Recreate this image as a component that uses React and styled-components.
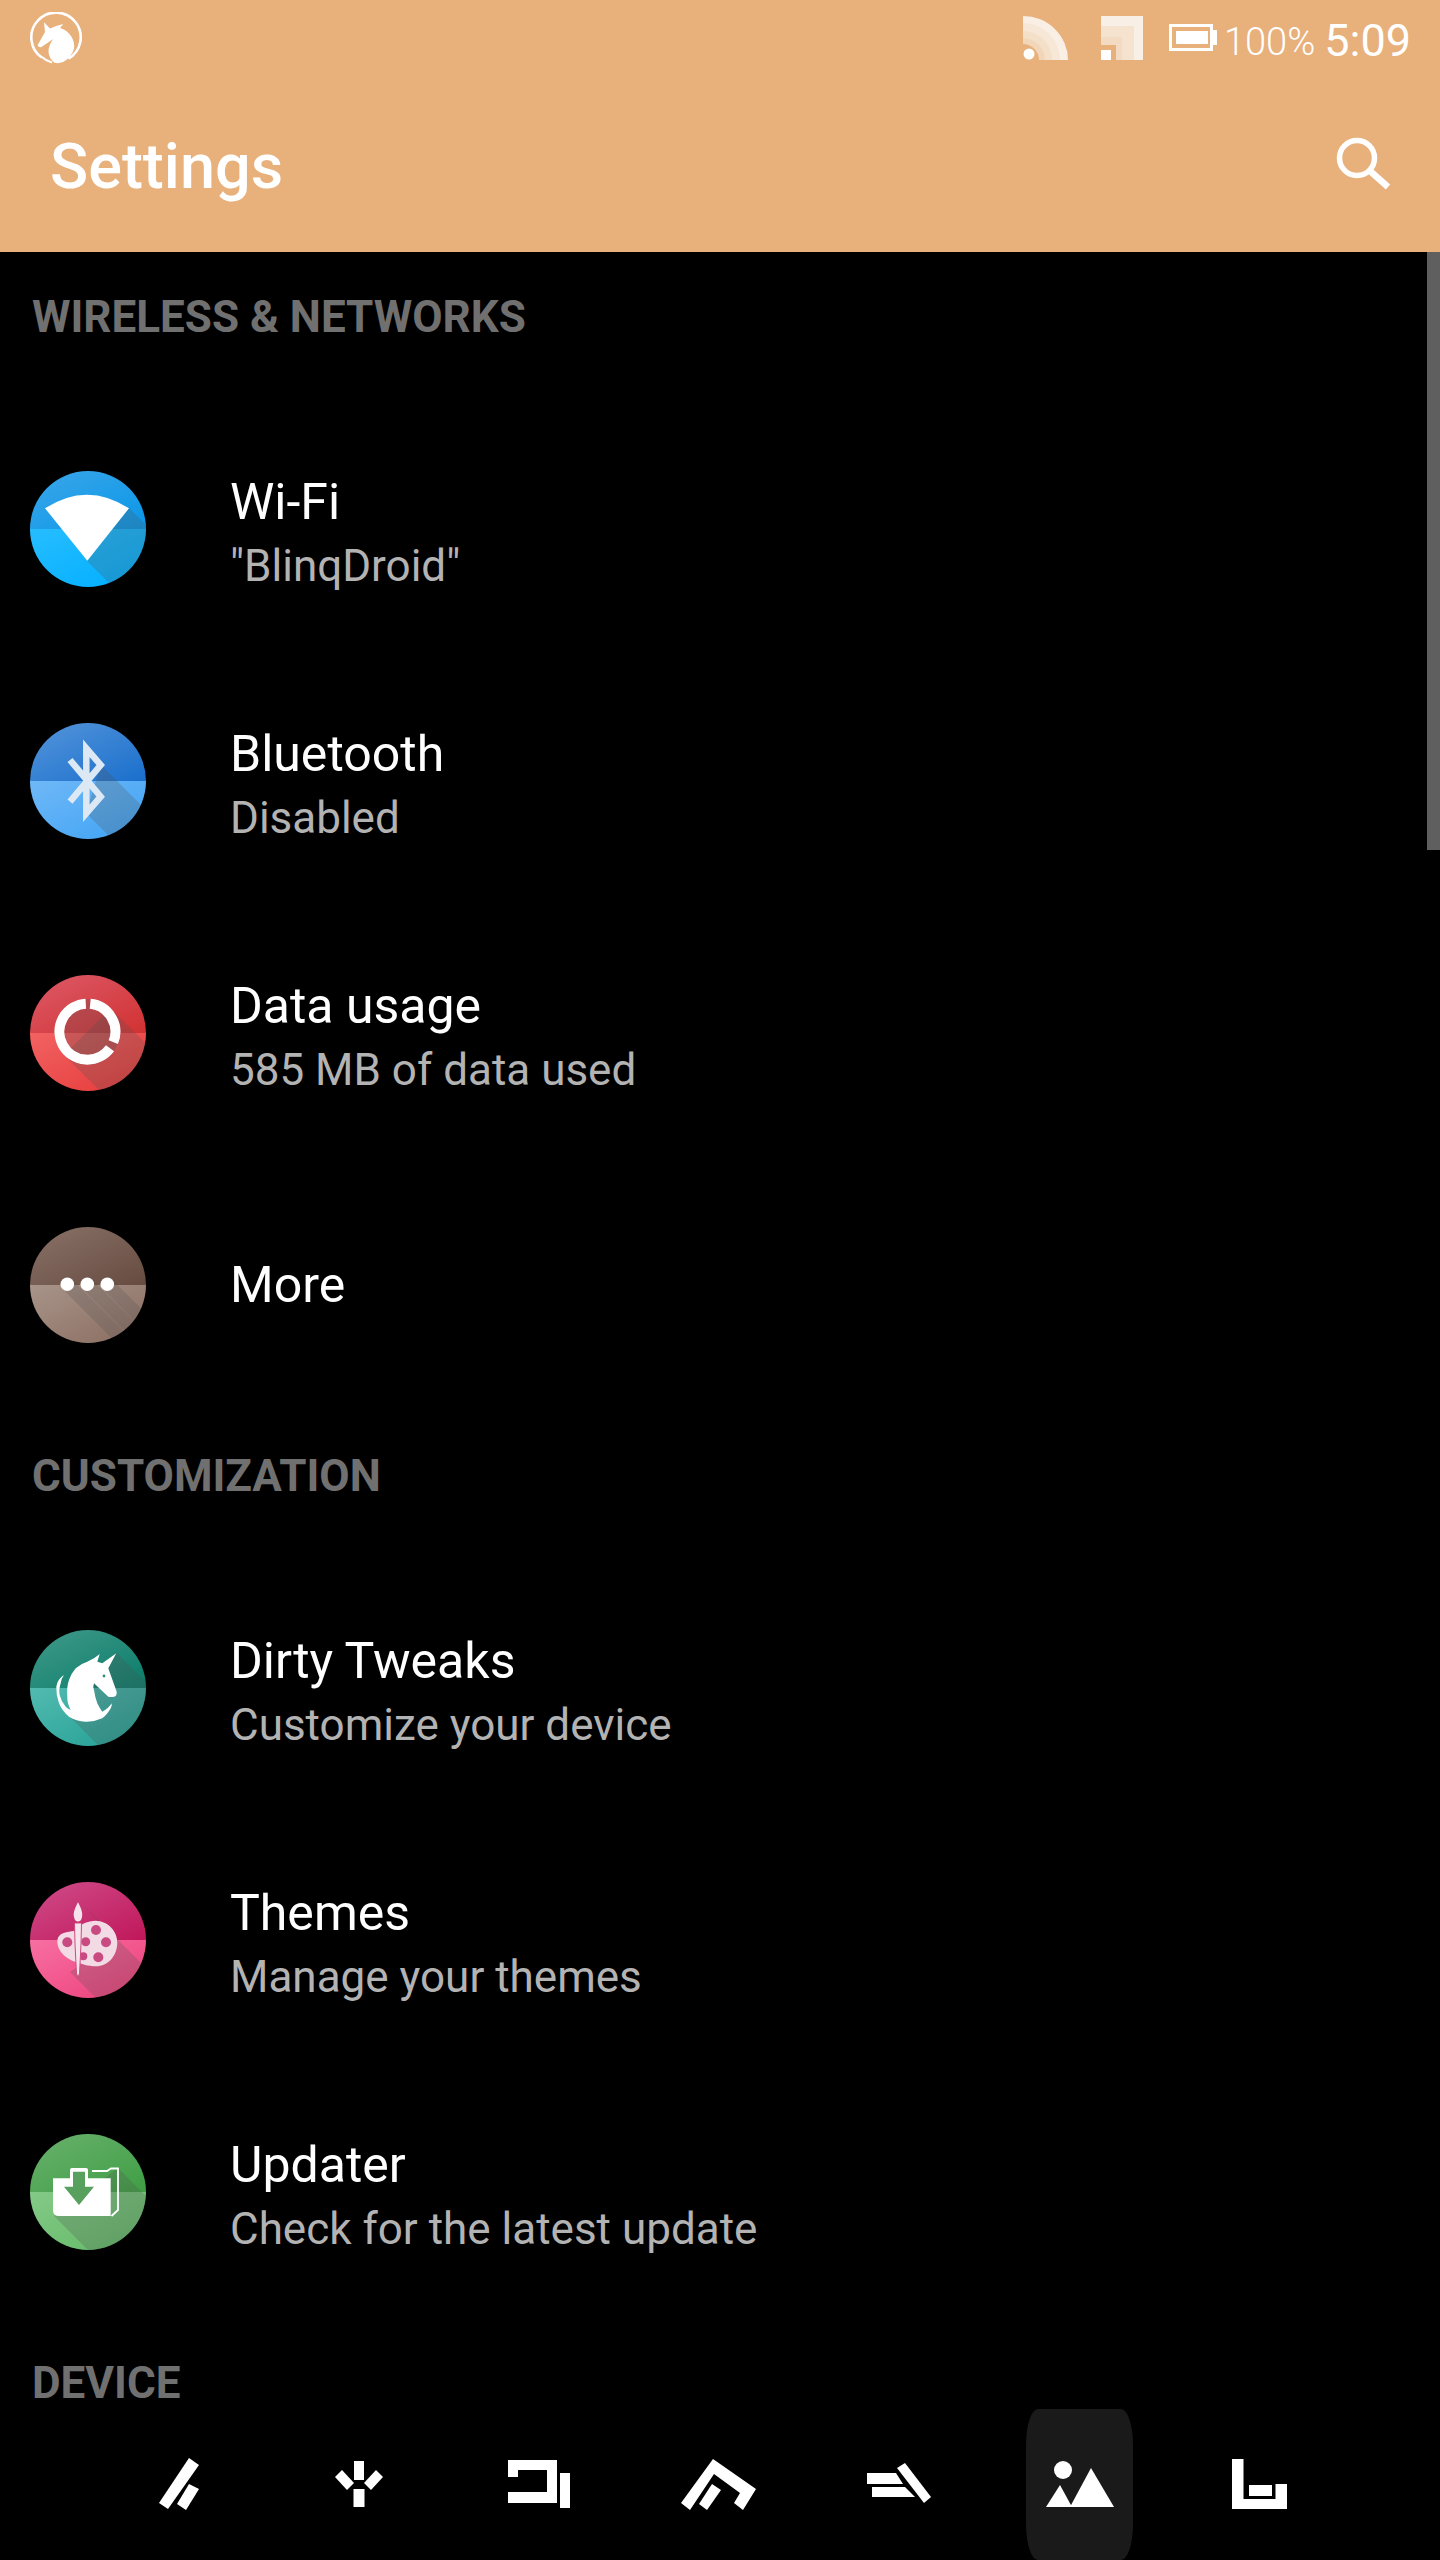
import React from "react";
import styled, { createGlobalStyle } from "styled-components";

const GlobalStyle = createGlobalStyle`
  html, body {
    margin: 0;
    padding: 0;
    background: #000;
  }
  body {
    font-family: "Roboto", "Liberation Sans", sans-serif;
  }
`;

const Page = styled.div`
  width: 1440px;
  height: 2560px;
  display: flex;
  flex-direction: column;
  overflow: hidden;
  background: #000;
`;

const Header = styled.header`
  height: 252px;
  flex: none;
  background: #e8b07b;
  color: #fff;
`;

const StatusBar = styled.div`
  height: 84px;
  display: flex;
  align-items: flex-start;
  padding: 12px 29px 0 30px;
  box-sizing: border-box;
`;

const StatusRight = styled.div`
  margin-left: auto;
  display: flex;
  align-items: flex-start;
  padding-top: 4px;
`;

const StatusIcon = styled.svg`
  display: block;
  flex: none;
  margin-right: ${(p) => p.$gap}px;
`;

const Battery = styled.span`
  font-size: 38px;
  font-weight: 300;
  line-height: 44px;
  margin: 4px 9px 0 7px;
`;

const Clock = styled.span`
  font-size: 45px;
  font-weight: 400;
  line-height: 50px;
`;

const Toolbar = styled.div`
  height: 168px;
  display: flex;
  align-items: center;
  justify-content: space-between;
  padding: 0 47px 0 50px;
  box-sizing: border-box;
`;

const Title = styled.h1`
  margin: 0 0 2px 0;
  font-size: 63px;
  font-weight: 500;
  line-height: 80px;
`;

const SearchIcon = styled.svg`
  display: block;
  margin-bottom: 8px;
`;

const List = styled.main`
  flex: 1;
  min-height: 0;
  position: relative;
  overflow: hidden;
`;

const Scrollbar = styled.div`
  position: absolute;
  top: 0;
  right: 0;
  width: 13px;
  height: 598px;
  background: #5f5f5f;
`;

const SectionTitle = styled.h2`
  margin: 0;
  height: 151px;
  padding: 37px 0 0 32px;
  box-sizing: border-box;
  font-size: 44px;
  font-weight: 700;
  line-height: 56px;
  color: #707070;
  text-transform: uppercase;
`;

const Row = styled.div`
  height: 252px;
  display: flex;
  align-items: center;
  padding-left: 30px;
`;

const IconSvg = styled.svg`
  display: block;
  flex: none;
  margin-right: 84px;
`;

const RowText = styled.div`
  display: flex;
  flex-direction: column;
  padding-top: ${(p) => (p.$single ? 0 : 9)}px;
`;

const RowTitle = styled.div`
  font-size: 50px;
  line-height: 62px;
  color: #fff;
`;

const RowSub = styled.div`
  margin-top: 2px;
  font-size: 44px;
  line-height: 62px;
  color: #b3b3b3;
`;

const NavBar = styled.nav`
  height: 151px;
  flex: none;
  display: flex;
  justify-content: center;
  background: #000;
`;

const NavSlot = styled.div`
  width: 180px;
  height: 151px;
  position: relative;
  display: flex;
  justify-content: center;
  &::before {
    content: "";
    display: ${(p) => (p.$active ? "block" : "none")};
    position: absolute;
    top: 0;
    bottom: 0;
    left: 36px;
    width: 107px;
    border-radius: 12px / 36px;
    background: #1a1a1a;
  }
`;

const NavSvg = styled.svg`
  display: block;
  position: relative;
`;

function AppIcon({ id, top, bottom, shadow, children }) {
  return (
    <IconSvg width="116" height="116" viewBox="0 0 116 116">
      <defs>
        <clipPath id={`${id}-clip`}>
          <circle cx="58" cy="58" r="58" />
        </clipPath>
        <linearGradient id={`${id}-top`} x1="0" y1="0" x2="1" y2="1">
          <stop offset="0" stopColor={top[0]} />
          <stop offset="1" stopColor={top[1]} />
        </linearGradient>
        <linearGradient id={`${id}-bottom`} x1="0" y1="0" x2="1" y2="1">
          <stop offset="0" stopColor={bottom[0]} />
          <stop offset="1" stopColor={bottom[1]} />
        </linearGradient>
      </defs>
      <g clipPath={`url(#${id}-clip)`}>
        <rect width="116" height="58" fill={`url(#${id}-top)`} />
        <rect y="58" width="116" height="58" fill={`url(#${id}-bottom)`} />
        {shadow.map((points) => (
          <polygon key={points} points={points} fill="#505050" fillOpacity="0.24" />
        ))}
      </g>
      {children}
    </IconSvg>
  );
}

const ROWS = {
  wifi: {
    title: "Wi-Fi",
    sub: '"BlinqDroid"',
    top: ["#3ba6e9", "#0a97e8"],
    bottom: ["#27bdff", "#00aeff"],
    shadow: ["99,37 57,90 157,190 199,137"],
    glyph: <path d="M15 37.3 Q57 10 99 37.3 L57.3 89.7 Z" fill="#fff" />,
  },
  bluetooth: {
    title: "Bluetooth",
    sub: "Disabled",
    top: ["#5595db", "#1a6fcc"],
    bottom: ["#6fb8f7", "#3fa3f5"],
    shadow: ["71,42 56,90 156,190 171,142"],
    glyph: (
      <path
        d="M40 78.7 L70.7 42 L56.3 25.3 V90.3 L70.7 73.7 L40 37"
        fill="none"
        stroke="#dce8f3"
        strokeWidth="6.5"
      />
    ),
  },
  data: {
    title: "Data usage",
    sub: "585 MB of data used",
    top: ["#dc5a68", "#d23232"],
    bottom: ["#f26262", "#e53a3a"],
    shadow: ["80.6,33.4 34,80 134,180 180.6,133.4"],
    glyph: (
      <g fill="none" stroke="#fff" strokeWidth="10">
        <circle cx="57.3" cy="56.7" r="33" fill="#505050" fillOpacity="0.24" stroke="none" />
        <path d="M60.2 28.8 A28 28 0 0 1 83.3 67.2" />
        <path d="M80 73.2 A28 28 0 1 1 55.8 28.7" />
      </g>
    ),
  },
  more: {
    title: "More",
    top: ["#8a7268", "#664b40"],
    bottom: ["#a89489", "#8a6c60"],
    shadow: [
      "42,52.6 32.6,62 132.6,162 142,152.6",
      "62,52.6 52.6,62 152.6,162 162,152.6",
      "82,52.6 72.6,62 172.6,162 182,152.6",
    ],
    glyph: (
      <g fill="#fff">
        <circle cx="37.3" cy="57.3" r="6.8" />
        <circle cx="57.3" cy="57.3" r="6.8" />
        <circle cx="77.3" cy="57.3" r="6.8" />
      </g>
    ),
  },
  dirty: {
    title: "Dirty Tweaks",
    sub: "Customize your device",
    top: ["#429a8b", "#0a7c69"],
    bottom: ["#52bab0", "#229f93"],
    shadow: ["86,22 37,84 137,184 186,122"],
    glyph: (
      <g>
        <path
          d="M86.3 23.3 L78.3 38.3 L86.7 61.7 Q87 66 84 66.7 Q81 67.5 78.3 66.7 L64 53.3 Q62.5 57 64 60 Q65 67 67.3 73.3 Q69.5 78 72.3 81.7 Q78 79 81.7 73.3 Q82 76 80.7 78.3 Q77 85 72.3 88.3 Q64 92 55.7 91.7 Q46 91 39 86.7 Q32 81 29 73.3 Q26 65 26.3 56.7 Q27.5 49 34 45 Q31 49 30.7 53.3 Q28.5 60 29.7 65 Q31 71 35.7 76.7 Q38 79 40.7 80 Q37 73 37.3 66.7 Q36.5 57 39 50 Q41.5 43 45.7 38.3 Q51 33.5 57.3 31.7 Q64 29 69.7 24 L67.3 31.7 L72.3 33.3 Z"
          fill="#fff"
        />
        <circle cx="74" cy="46" r="1.4" fill="#2a8f80" />
      </g>
    ),
  },
  themes: {
    title: "Themes",
    sub: "Manage your themes",
    top: ["#d04d8a", "#c0175a"],
    bottom: ["#f76fa2", "#ec3f79"],
    shadow: ["52,22 86,60 186,160 152,122", "40,90 86,60 186,160 140,190"],
    glyph: (
      <g>
        <path
          d="M27.3 58.7 C28 50 38 50 44 49 C50 42 58 38.7 65.7 38.7 C78 39 87.3 49 87.3 60.3 C87.3 74 78 84.3 66 84.3 C58 84.3 52 82 47 80.3 C38 78 27 70 27.3 58.7 Z"
          fill="#f3dbe6"
        />
        <g fill="#c84a80">
          <circle cx="66" cy="48" r="5" />
          <circle cx="76" cy="60.3" r="5" />
          <circle cx="68.3" cy="75.3" r="5" />
          <circle cx="37.3" cy="60.3" r="5" />
          <circle cx="55.7" cy="59.7" r="4.5" />
          <circle cx="53.3" cy="74.3" r="4" />
        </g>
        <path
          d="M48 20.3 C51 26 53 31 52 35 C51.5 38 50 39.5 48 39.5 C46 39.5 44.5 38 44 35 C43 31 45 26 48 20.3 Z"
          fill="#f6e4ec"
        />
        <path
          d="M44.5 41 H51.5 L51 62 L49.5 92 Q48 95 46.5 92 L45 62 Z"
          fill="#f6e4ec"
          stroke="#cf4a80"
          strokeWidth="1"
        />
      </g>
    ),
  },
  updater: {
    title: "Updater",
    sub: "Check for the latest update",
    top: ["#6ab06e", "#3f9f44"],
    bottom: ["#84c987", "#62ba67"],
    shadow: ["88,34 24,82 124,182 188,134"],
    glyph: (
      <g>
        <path
          d="M23 44.3 H40 V36 Q40 34 42 34 H56 Q58 34 58 36 V44.3 H80.7 V82 H29 Q23 82 23 76 Z"
          fill="#fff"
        />
        <path d="M43 37.7 H55 V52.7 H64 L49 71 L34 52.7 H43 Z" fill="#58a05d" />
        <path
          d="M62 37 H77 L81 34.5 H88 V76 L81.5 82"
          fill="none"
          stroke="#fff"
          strokeWidth="1.8"
        />
      </g>
    ),
  },
};

function SettingRow({ name }) {
  const row = ROWS[name];
  return (
    <Row>
      <AppIcon id={name} top={row.top} bottom={row.bottom} shadow={row.shadow}>
        {row.glyph}
      </AppIcon>
      <RowText $single={!row.sub}>
        <RowTitle>{row.title}</RowTitle>
        {row.sub && <RowSub>{row.sub}</RowSub>}
      </RowText>
    </Row>
  );
}

// nav glyphs are written in page coordinates, each slot shows its own window of them
const NAV_ICONS = [
  <g key="a">
    <polygon points="189,2458 199,2465 168,2509 159,2503" />
    <polygon points="189,2484 199,2489 186,2510 177,2504" />
  </g>,
  <g key="b">
    <rect x="354" y="2461" width="10" height="19" />
    <rect x="353.500" y="2489" width="11" height="18" />
    <polygon points="342,2470 354,2483 347,2490 335,2477" />
    <polygon points="376,2470 383,2477 371,2490 364,2483" />
  </g>,
  <g key="c">
    <polygon points="508,2460 557,2460 557,2503 508,2503 508,2492 547,2492 547,2470 518,2470 518,2477 508,2477" />
    <rect x="560" y="2473" width="10" height="35" />
  </g>,
  <g key="d">
    <polygon points="713,2459 756,2489 743,2510 734,2503 740,2493 714,2474 690,2510 681,2503" />
    <polygon points="712,2484 721,2490 707,2510 699,2504" />
  </g>,
  <g key="e">
    <polygon points="867,2473 896,2473 903,2484 867,2484" />
    <polygon points="872,2487 905,2487 915,2497 872,2497" />
    <polygon points="905,2463 931,2497 924,2503 897,2468" />
  </g>,
  <g key="f">
    <circle cx="1063" cy="2470" r="9" />
    <polygon points="1091,2468 1114,2507 1070,2507" />
    <polygon points="1060,2485 1072,2507 1046,2507" />
  </g>,
  <g key="g">
    <polygon points="1232,2459 1243.500,2459 1243.500,2499 1275.500,2499 1275.500,2484 1287,2484 1287,2509 1232,2509" />
    <rect x="1249" y="2485" width="23" height="11" />
  </g>,
];

function App() {
  return (
    <Page>
      <GlobalStyle />
      <Header>
        <StatusBar>
          <svg width="53" height="52" viewBox="0 0 53 52">
            <path
              d="M11.800 45.500 A24.700 24.700 0 1 1 38.350 46.700"
              fill="none"
              stroke="#fff"
              strokeWidth="2.600"
            />
            <path d="M12 45 Q16 49 22 50.500" fill="none" stroke="#fff" strokeWidth="2" />
            <path
              d="M14 10.300 L20 16.500 Q26 13.500 33.300 12 L30 16 Q37 18 41 24 Q45 30 44 37 Q41 46 33 50 Q28 52 24 50.500 Q19 46 18.500 40 Q18.500 33 23.300 27 L11 35.300 Q8 35.500 7.700 33 L15 20 Z"
              fill="#fff"
            />
          </svg>
          <StatusRight>
            <StatusIcon $gap={33} width="45" height="44" viewBox="0 0 45 44">
              <path d="M0 0 A45 44 0 0 1 45 44 H0 Z" fill="#f9efe5" />
              <path d="M0 7 A37 37 0 0 1 37 44 H0 Z" fill="#f7e7d7" />
              <path d="M0 15 A29 29 0 0 1 29 44 H0 Z" fill="#f4dfc9" />
              <path d="M0 22 A22 22 0 0 1 22 44 H0 Z" fill="#f2d6ba" />
              <path d="M0 28 A16 16 0 0 1 16 44 H0 Z" fill="#e8b07b" />
              <circle cx="6" cy="38" r="5.500" fill="#fff" />
            </StatusIcon>
            <StatusIcon $gap={26} width="42" height="44" viewBox="0 0 42 44">
              <rect width="42" height="44" fill="#f8efe6" />
              <rect y="10" width="33" height="34" fill="#f5e3d0" />
              <rect y="21" width="21" height="23" fill="#f3dbc3" />
              <rect y="29" width="15" height="15" fill="#e8b07b" />
              <rect y="34" width="10" height="10" fill="#fff" />
            </StatusIcon>
            <StatusIcon $gap={0} width="48" height="44" viewBox="0 0 48 44">
              <rect x="1.500" y="9.500" width="41" height="24" fill="none" stroke="#fff" strokeWidth="3" />
              <rect x="7" y="15" width="32" height="13" fill="#fff" />
              <rect x="44" y="14" width="4" height="15" fill="#fff" />
            </StatusIcon>
            <Battery>100%</Battery>
            <Clock>5:09</Clock>
          </StatusRight>
        </StatusBar>
        <Toolbar>
          <Title>Settings</Title>
          <SearchIcon width="60" height="60" viewBox="0 0 60 60">
            <circle cx="24" cy="24" r="17.500" fill="none" stroke="#fff" strokeWidth="5.500" />
            <path d="M36.500 36.500 L55 53" fill="none" stroke="#fff" strokeWidth="6.500" />
          </SearchIcon>
        </Toolbar>
      </Header>
      <List>
        <Scrollbar />
        <SectionTitle>Wireless &amp; networks</SectionTitle>
        <SettingRow name="wifi" />
        <SettingRow name="bluetooth" />
        <SettingRow name="data" />
        <SettingRow name="more" />
        <SectionTitle>Customization</SectionTitle>
        <SettingRow name="dirty" />
        <SettingRow name="themes" />
        <SettingRow name="updater" />
        <SectionTitle>Device</SectionTitle>
      </List>
      <NavBar>
        {NAV_ICONS.map((icon, i) => (
          <NavSlot key={icon.key} $active={i === 5}>
            <NavSvg
              width="180"
              height="151"
              viewBox={`${90 + 180 * i} 2409 180 151`}
              fill="#fff"
            >
              {icon}
            </NavSvg>
          </NavSlot>
        ))}
      </NavBar>
    </Page>
  );
}

export default App;
